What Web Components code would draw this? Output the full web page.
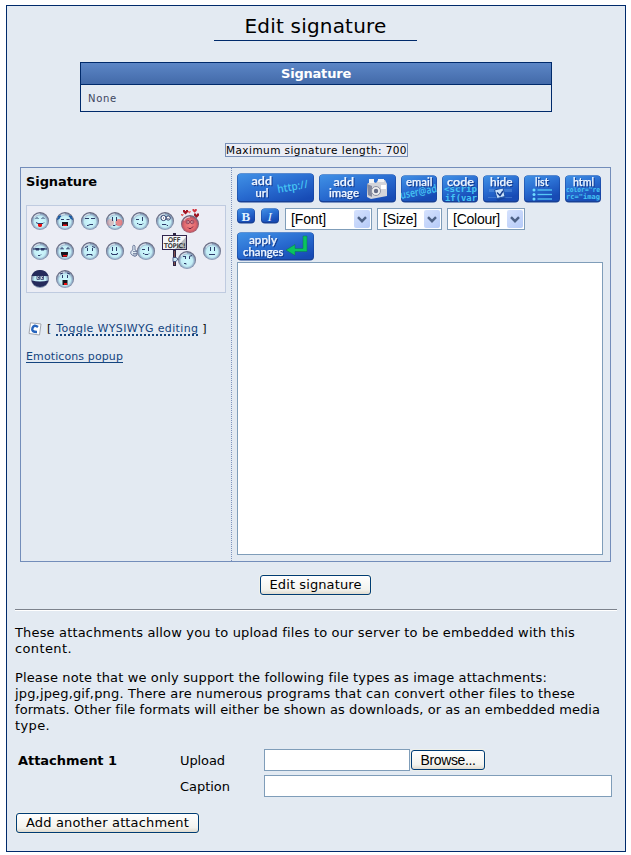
<!DOCTYPE html>
<html lang="en"><head><meta charset="utf-8"><title>Edit signature</title>
<style>html,body{margin:0;background:#fff}body{font:13px/16px "DejaVu Sans",sans-serif;color:#000;height:855px;overflow:hidden}</style></head>
<body><signature-page></signature-page>
<script>
const define=(name,html,setup)=>customElements.define(name,class extends HTMLElement{
  connectedCallback(){
    if(this.shadowRoot)return;
    const r=this.attachShadow({mode:'open'});
    r.innerHTML=typeof html==='function'?html(this):html;
    if(setup)setup(this,r);
  }
});

/* One line of text, tracked so that it fills the width in its w attribute. */
define('fit-text','<style>:host{display:inline-block;white-space:pre}</style><span><slot></slot></span>',(el,r)=>{
  const s=r.querySelector('span'),n=el.textContent.length;
  const d=(+el.getAttribute('w')-s.getBoundingClientRect().width)/n;
  s.style.letterSpacing=d+'px';
  el.style.width=el.getAttribute('w')+'px';
});

define('xp-button',`<style>:host{display:block;box-sizing:border-box;height:20px;border-radius:3px;box-shadow:0 0 0 1px #eef0ea}
button{display:block;box-sizing:border-box;width:100%;height:20px;margin:0;padding:0;border:1px solid #003c74;border-radius:3px;background:linear-gradient(#fff,#f3f3ee 75%,#dfdbd0);font:inherit;line-height:18px;color:#000;text-align:center;white-space:nowrap}</style><button><slot></slot></button>`);

define('xp-select',el=>`<style>:host{display:flex;box-sizing:border-box;border:1px solid #7f9db9;background:#fff;padding:1px 1px 1px 5px;justify-content:space-between;align-items:stretch;font:14px/19px "Liberation Sans",sans-serif}
svg{display:block;width:16px;height:100%;background:linear-gradient(135deg,#d6e2fd,#b5caf8);border-radius:2px}</style>
<slot></slot><svg viewBox="0 0 16 18" preserveAspectRatio="xMidYMid meet"><path d="M4 7.2L8 11.2L12 7.2" fill="none" stroke="#4d6185" stroke-width="2.4"/></svg>`);

define('xp-field',`<style>:host{display:block;box-sizing:border-box;border:1px solid #7f9db9;background:#fff}</style>`);

/* Round face emoticon; the kind picks the eyes and the mouth. */
const INK='#2e3b6a';
const P=(d,c=INK,w=1)=>`<path d="${d}" fill="none" stroke="${c}" stroke-width="${w}"/>`;
const smile='M6 11.500h1v1h4v-1h1', eyes='M7.500 5v4M11.500 5v4';
const FACES={
 tongue:P('M4.500 7L6 5.500L7.500 7M10.500 7L12 5.500L13.500 7M5 10.500l2 1h5l1-1')+'<path d="M7 12h4v2l-1 1H8l-1-1z" fill="#e11"/>',
 cry:P('M1 7.500l3-2M2 5l3-1M17 7.500l-3-2M16 5l-3-1','#175aa4',1.500)+P('M5 7.500h3M10.500 7.500h3')+'<path d="M6 10h6v4H6z" fill="#17171f"/><path d="M7 12.500h4v1.500H7z" fill="#e11"/>',
 smirk:P('M4 6.500h4M10 6.500h4M6 13.500h1l2-1h3'),
 blush:'<circle cx="4.500" cy="10.500" r="3.500" fill="#e98080" opacity=".45"/><circle cx="13" cy="10.500" r="3.500" fill="#ee6666" opacity=".75"/>'+P('M6.500 5v4M10.500 5v4')+P('M7 13.500h2l1-1'),
 wink:P('M11.500 5v4M5 7.500h3')+P('M6 11.500h1l1 1h3l1-1'),
 dizzy:'<circle cx="7.500" cy="6" r="2.600" fill="#fff" stroke="#2e3b6a"/><circle cx="12.200" cy="6" r="2.100" fill="#fff" stroke="#2e3b6a"/>'+P('M7 6h1M11.500 6.500h1M6 12.500h4l1 1h1'),
 glasses:P('M2 7h14',INK,1.200)+'<path d="M4 6h4v2.500H5zM10 6h4l-1 2.500h-3z" fill="#2e3b6a"/>'+P('M7 13.500h2l1-1'),
 laugh:P('M5 7.500V6h2v1.500M11 7.500V6h2v1.500')+'<path d="M5 10h7v2l-1 3H6l-1-3z" fill="#17171f"/><path d="M7 13h4v1.500H7z" fill="#e11"/>',
 sad:P('M4 5.500l3-1M14 5.500l-3-1M6.500 6v3M11.500 6v3M6 14v-1.500h5V14'),
 smile:P('M6.500 5v4M10.500 5v4')+P('M5 11.500h1v1h5v-1h1'),
 flat:P('M7.500 5v4M11.500 5v4')+P('M6 12.500h6'),
 angry:P('M5 5.500h3M14 4.500l-3 1M7.500 6v2M11.500 6v2M6 12.500h2v1'),
 ninja:'<path d="M9 0A9 9 0 0 0 .4 6h17.200A9 9 0 0 0 9 0zM.5 10.500Q9 12.500 17.500 10.500A8.800 8.800 0 0 1 .5 10.500z" fill="#252b5c"/><path d="M6 6h2.500v3.500H6zM9.800 6h2.700v3.500H9.800z" fill="#fff" stroke="#2e3b6a" stroke-width=".8"/>'+P('M7.500 7v1.500M11.500 7v1.500'),
 shock:P('M4 4l3-1M11 3l3 1M6.500 5v3M11.500 5v3')+'<path d="M6.500 10h5v5h-5z" fill="#17171f"/><path d="M8 13h3v2H8z" fill="#e11"/>',
 love:'<circle cx="6.800" cy="7" r="1.700" fill="#ffc4c4" stroke="#7a2845" stroke-width=".8"/><circle cx="11.200" cy="7" r="1.700" fill="#ffc4c4" stroke="#7a2845" stroke-width=".8"/>'+P('M6 7h1.500M10.500 7h1.500M7 12.500l1 1h2l2-2','#712441')
};
let uid=0;
const disc=(kind)=>{const g='g'+(++uid),red=kind==='love';
 return `<defs><radialGradient id="${g}" cx=".5" cy=".54" r=".5"><stop offset="0" stop-color="${red?'#f08484':'#cffaff'}"/><stop offset=".62" stop-color="${red?'#e2686e':'#c3edf5'}"/><stop offset=".84" stop-color="${red?'#b95a68':'#8fa6c2'}"/><stop offset="1" stop-color="#66687f"/></radialGradient></defs><circle cx="9" cy="9" r="9" fill="url(#${g})"/><path d="M3 5.500Q5 2 9 2" fill="none" stroke="#fff" stroke-width="1.200" opacity=".7"/>${FACES[kind]}`};
const heart=(x,y,s,c)=>`<path transform="translate(${x} ${y}) scale(${s})" d="M0 1V0h2v1h1V0h2v2L2.500 4.500 0 2z" fill="${c}"/>`;
define('emote-icon',el=>{
 const k=el.getAttribute('kind');let w=18,h=18,s;
 if(k==='love'){h=24;s=heart(2,1,1,'#a31725')+heart(11.500,0,.85,'#d33440')+heart(13,4.500,1,'#9b1422')+heart(7,2,.55,'#e66')+heart(0,5,.5,'#d55')+`<g transform="translate(0 6)">${disc(k)}</g>`}
 else if(k==='thumb'){w=25;s=`<path d="M2 13L.8 11.500V9.500l2-1.500V4l1-1 1.200 1v4l2 1v4l-2 1.500z" fill="#e0eaf2" stroke="#56658a" stroke-width=".8"/>${P('M3 9.500h4M3 11.500h4M3 13h4','#56658a',.7)}<g transform="translate(7 0)">${disc('wink')}</g>`}
 else if(k==='offtopic'){w=35;h=36;s=`<path d="M11 0h3v33h-3z" fill="#2d2442"/><path d="M12 18h1v14h-1z" fill="#83504d"/><rect x=".500" y="2.500" width="24" height="14" fill="#f5f5f6" stroke="#30254d"/><path d="M24 4v12H13z" fill="#b4b7bb"/><text x="6" y="8.800" font-family="DejaVu Sans" font-size="6.300" stroke="#111" stroke-width=".2" textLength="12.500" lengthAdjust="spacingAndGlyphs" fill="#111">OFF</text><text x="2" y="15.200" font-family="DejaVu Sans" font-size="6.300" stroke="#111" stroke-width=".2" textLength="21.500" lengthAdjust="spacingAndGlyphs" fill="#111">TOPIC!</text><g transform="translate(16 18)">${disc('angry')}</g><path d="M11 24.500h3l2 1.500-2 2.500h-3z" fill="#c9e9f3" stroke="#303d70" stroke-width=".8"/>`}
 else s=disc(k);
 return `<style>:host{display:block;flex:none}svg{display:block}</style><svg width="${w}" height="${h}">${s}</svg>`});

/* Glossy blue editor button: the art attribute selects the drawing behind the label. */
const txt=(x,y,t,w,size=12)=>`<text class="l" x="${x}" y="${y}" font-family="Lato,Open Sans,sans-serif" font-weight="600" font-size="${size}" textLength="${w}" lengthAdjust="spacingAndGlyphs" fill="#eef6ff">${t}</text>`;
const deco=(x,y,t,w,o='',f='DejaVu Sans Mono',z=9)=>`<text x="${x}" y="${y}" ${o} font-family="${f},monospace" font-size="${z}" font-weight="600" textLength="${w}" lengthAdjust="spacingAndGlyphs" fill="#45c4f3">${t}</text>`;
const ART={
 url:[77,30,deco(0,0,'http://',31,'transform="translate(41 20) rotate(-10)"','Open Sans',11)+txt(14.500,12,'add',20.500)+txt(18.500,23.500,'url',13)],
 image:[77,29,'<g><path d="M48 10l5-3 4 2 2-3h7l2 4 0 12-16 3-4-2z" fill="#d4d5da"/><path d="M48 10l5 2v11l-4-2z" fill="#85899c"/><path d="M50 5h5v4h-5zM59 5h6v3h-6z" fill="#f4f4f4"/><circle cx="57" cy="17" r="4.500" fill="#eee" stroke="#8c91a2"/><circle cx="57" cy="17" r="2.200" fill="#656d87"/><path d="M62 11h5v4h-5z" fill="#fff"/></g>'+txt(14.500,11.500,'add',20.500)+txt(10,23,'image',30)],
 email:[36,28,deco(0,0,'user@ad',37,'transform="translate(0 24) rotate(-11)"','Open Sans',11)+txt(5,11,'email',26.500)],
 code:[36,28,deco(2,17,'&lt;scrip',33)+deco(3,25.500,'if(var',32)+txt(5,11,'code',27)],
 hide:[36,28,'<path d="M6 14h23v3H6zM5 22h24v1H5z" fill="#86b9ef" opacity=".3"/><path d="M13 24l8-2 2 1-8 3z" fill="#123c8e" opacity=".6"/><path d="M11.500 15l8.500-2 2 8.500-8 2z" fill="#c9e1fb" stroke="#1d52a6"/><path d="M14 17.500l3 3 3-4.500" fill="none" stroke="#173e8d" stroke-width="1.500"/>'+txt(7,11,'hide',22.500)],
 list:[36,28,[15,19.500,24].map(y=>`<circle cx="10" cy="${y}" r="1.500" fill="#6edcff"/><path d="M13.500 ${y}h14.500" stroke="#56c8f6" stroke-width="1.300"/>`).join('')+txt(11,11,'list',13.500)],
 html:[36,28,deco(1,17,'color="re',34,'','DejaVu Sans Mono',7)+deco(1,24,'rc="imag',34,'','DejaVu Sans Mono',7)+txt(8,10.500,'html',21)],
 apply:[77,29,'<path d="M66 4h4v15.500H58v4l-9-5.500 9-5.500v4h8z" fill="#0ac45f" stroke="#0d7450" stroke-width=".5"/>'+txt(12,11.500,'apply',28)+txt(6,23.500,'changes',40.500)],
 b:[18,16,'<text x="4.500" y="12.500" font-family="Liberation Serif" font-weight="bold" font-size="13" fill="#dff1ff">B</text>'],
 i:[18,16,'<text x="6.500" y="12.500" font-family="Liberation Serif" font-style="italic" font-size="13.500" fill="#dff1ff">I</text>']
};
define('tool-button',el=>{const [w,h,s]=ART[el.getAttribute('art')],g='t'+(++uid);
 return `<style>:host{display:block;flex:none}svg{display:block;overflow:hidden}.l{filter:drop-shadow(1px 1px .5px #123b91);stroke:#eef6ff;stroke-width:.25px}</style><svg width="${w}" height="${h}"><defs><linearGradient id="${g}" x1="0" y1="0" x2="${w>40?.8:.5}" y2="1"><stop offset="0" stop-color="#4192e6"/><stop offset=".55" stop-color="#286bd0"/><stop offset="1" stop-color="#174bb5"/></linearGradient></defs><rect x="0" y=".500" width="${w}" height="${h-1}" rx="4" fill="#174095"/><rect x=".500" y=".500" width="${w-1}" height="${h-2.500}" rx="3.500" fill="url(#${g})"/>${s}</svg>`});

define('info-table',`<style>:host{display:block;box-sizing:border-box;width:472px;height:50px;border:1px solid #002a6b;margin:21px 0 0 73px}
header{height:21px;border-bottom:1px solid #002a6b;background:linear-gradient(#5c86c6,#436aa9);color:#fff;font-weight:bold;text-align:center;line-height:21px}
div{font-size:10px;line-height:27px;padding-left:7px;color:#3c4560}</style><header><fit-text w="70">Signature</fit-text></header><div><fit-text w="29">None</fit-text></div>`);

const row=(...k)=>k.map(x=>`<emote-icon kind="${x}"></emote-icon>`).join('');
define('emote-panel',`<style>:host{display:block;box-sizing:border-box;width:200px;height:88px;border:1px solid #bfcbe0;background:#ebedf5;padding:3px 0 0 4px}
div{display:flex;gap:7px}.a{height:24px;align-items:flex-start}.a emote-icon{padding-top:3px}.a emote-icon:last-child{padding-top:0}
.b{height:36px}.b emote-icon{padding-top:9px}.b emote-icon[kind=thumb]{margin-left:-1px}.b emote-icon[kind=offtopic]{padding-top:0}.b emote-icon:last-child{margin-left:-1px}.c{margin-top:1px}</style>
<div class="a">${row('tongue','cry','smirk','blush','wink','dizzy','love')}</div>
<div class="b">${row('glasses','laugh','sad','smile','thumb','offtopic','flat')}</div>
<div class="c">${row('ninja','shock')}</div>`);

define('editor-side',`<style>:host{display:block;box-sizing:border-box;width:211px;padding:6px 0 0 5px;border-right:1px dotted #7e93bd;font-size:11px}
h2{margin:0 0 15px;font:bold 13px/16px "DejaVu Sans"}.t{display:flex;align-items:center;margin-top:28px;height:16px}.t svg{margin:0 5px 0 2px}
a{color:#14457f;text-decoration:none;display:block;height:13px;line-height:14px;border-bottom:1px solid}.t a{border-bottom:2px dotted #14457f;height:11px;line-height:12px;margin:0 4px 0 5px}.e{width:97px;margin-top:13px;height:12px;line-height:13px}</style>
<h2><fit-text w="71">Signature</fit-text></h2><emote-panel></emote-panel>
<div class="t"><svg width="14" height="14"><path d="M2.500 .800L13 2l-1.500 11L1 11.500z" fill="#fff" stroke="#a0a5ae"/><path d="M10 5Q6 2 4.500 6T9 10" fill="none" stroke="#2564bd" stroke-width="2.400"/></svg><span>[</span><a><fit-text w="142">Toggle WYSIWYG editing</fit-text></a><span>]</span></div>
<a class="e"><fit-text w="97">Emoticons popup</fit-text></a>`);

const tb=k=>`<tool-button art="${k}"></tool-button>`;
define('editor-main',`<style>:host{display:block;padding:5px 0 0 5px;width:366px}
div{display:flex}.r1{gap:5px;height:30px;align-items:center}.r1 tool-button:nth-child(n+3){margin-top:1px}.r2{height:29px;padding-top:5px;box-sizing:border-box}
.r2 tool-button+tool-button{margin:0 6px}xp-select{height:22px;flex:none;margin-right:5px;width:78px}.f{width:87px}.s{width:65px}xp-field{height:293px;width:366px}.a{height:30px}</style>
<div class="r1">${['url','image','email','code','hide','list','html'].map(tb).join('')}</div>
<div class="r2">${tb('b')}${tb('i')}<xp-select class="f"><fit-text w="35">[Font]</fit-text></xp-select><xp-select class="s"><fit-text w="34">[Size]</fit-text></xp-select><xp-select><fit-text w="47">[Colour]</fit-text></xp-select></div>
<div class="a">${tb('apply')}</div><xp-field></xp-field>`);

define('signature-editor',`<style>:host{display:flex;box-sizing:border-box;width:591px;height:395px;border:1px solid #738dba;margin:10px 0 0 13px}</style><editor-side></editor-side><editor-main></editor-main>`);

define('attachment-form',`<style>:host{display:grid;grid-template-columns:162px 84px 348px;grid-template-rows:22px 22px;row-gap:4px;margin:17px 0 0 11px;line-height:23px}
b{grid-row:1/3}.u{display:flex;gap:1px}.u xp-field{width:146px;height:22px}.u xp-button{width:74px;margin-top:1px;font:14px/18px "Liberation Sans"}</style>
<b><fit-text w="99">Attachment 1</fit-text></b><span><fit-text w="45">Upload</fit-text></span><div class="u"><xp-field></xp-field><xp-button><fit-text w="55">Browse...</fit-text></xp-button></div>
<span><fit-text w="50">Caption</fit-text></span><xp-field></xp-field>`);

const para=a=>'<p>'+a.map(([t,w])=>`<fit-text w="${w}">${t}</fit-text>`).join('<br>')+'</p>';
define('signature-page',`<style>:host{display:flex;flex-direction:column;align-items:flex-start;box-sizing:border-box;width:620px;height:847px;margin:5px 0 0 6px;border:1px solid #002a6b;background:#e3eaf2}
h1{box-sizing:border-box;margin:0 0 0 207px;width:203px;height:35px;border-bottom:1px solid #002a6b;font:20px/24px "DejaVu Sans";padding-top:8px;text-align:center;flex:none}
.m{box-sizing:border-box;width:183px;height:14px;margin:31px 0 0 218px;border:1px solid #7890b8;background:#ebedf5;font-size:10.500px;line-height:13px;text-align:center}
.save{width:111px;margin:13px 0 0 253px;flex:none}hr{box-sizing:border-box;width:602px;height:2px;margin:14px 0;border:0;border-top:1px solid #7c828c;border-bottom:1px solid #fff;margin-left:8px}
p{margin:0 0 13px 8px;line-height:16px}p fit-text{vertical-align:top}attachment-form{margin-top:2px}.add{width:183px;margin:16px 0 0 9px}signature-editor,info-table{flex:none}</style>
<h1><fit-text w="142">Edit signature</fit-text></h1><info-table></info-table>
<div class="m"><fit-text w="181">Maximum signature length: 700</fit-text></div><signature-editor></signature-editor>
<xp-button class="save"><fit-text w="92">Edit signature</fit-text></xp-button><hr>
${para([['These attachments allow you to upload files to our server to be embedded with this',560],['content.',57]])}
${para([['Please note that we only support the following file types as image attachments:',532],['jpg,jpeg,gif,png. There are numerous programs that can convert other files to these',560],['formats. Other file formats will either be shown as downloads, or as an embedded media',585],['type.',35]])}
<attachment-form></attachment-form><xp-button class="add"><fit-text w="163">Add another attachment</fit-text></xp-button>`);
</script></body></html>
